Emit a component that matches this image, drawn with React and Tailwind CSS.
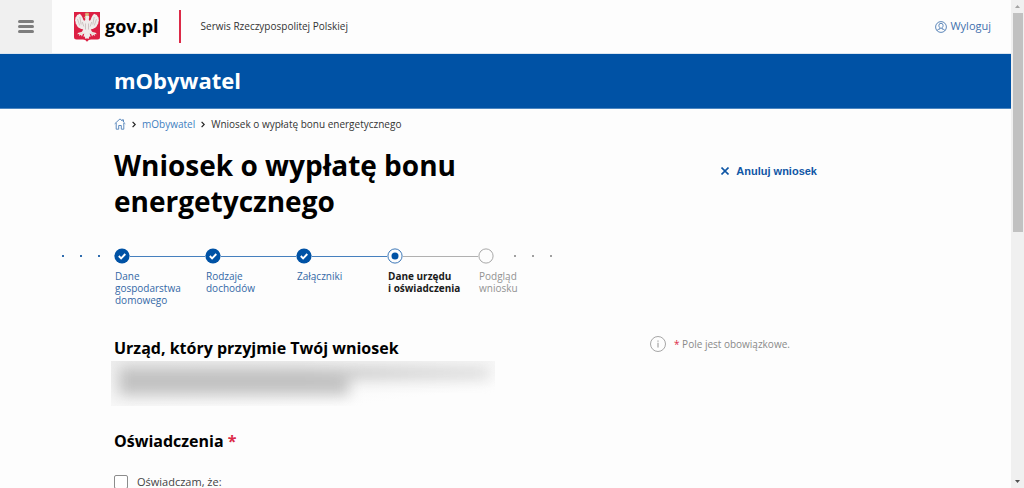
const steps = [
  { label: ['Dane', 'gospodarstwa', 'domowego'], state: 'done' },
  { label: ['Rodzaje', 'dochodów'], state: 'done' },
  { label: ['Załączniki'], state: 'done' },
  { label: ['Dane urzędu', 'i oświadczenia'], state: 'current' },
  { label: ['Podgląd', 'wniosku'], state: 'todo' },
];

const labelStyles = {
  done: 'text-[#3468a6]',
  current: 'font-bold text-[#1b1b1b]',
  todo: 'text-[#929292]',
};

const Eagle = () => (
  <svg viewBox="0 0 26 30" className="h-[30px] w-[26px]" aria-hidden="true">
    <path d="M0 0h26v25q0 2.500-2.500 2.500H17q-2.500 0-4 2.200-1.500-2.200-4-2.200H2.500Q0 27.500 0 25z" fill="#dc1f43" />
    <g fill="#f0eceb">
      <path d="M11.200 4.200c.4-1.300 3.700-1.500 4 .6.200 1.500-.7 2.200-.2 3.500.8.700 1.400.2 1.800-.8.700-2.200 1.700-4.500 3.600-5.700.6.900 1.700.7 2.700 1.500-.1 1.100 1.100 1.600 1.600 2.500-.4 1 .3 2 .2 3.100-.8.700-.3 2-.8 3-1 .4-.8 1.600-1.400 2.500-.9.100-1 1.200-1.800 1.700-.9-.2-1.300.9-2.200 1-.6-.5-1.200.2-1.900.2.400 1.200.8 2 1.800 2.700l3 .8 1.300 1.500-2.300-.2.600 1.900-2.100-1.200-1 1.600-.9-2.200-1.500-.6.900 3.200-1.300-.3-.8 2.400-1.500-.7-1.500.7-.8-2.400-1.300.3.900-3.200-1.500.6-.9 2.200-1-1.600-2.100 1.200.6-1.900-2.300.2 1.300-1.500 3-.8c1-.7 1.400-1.500 1.800-2.700-.7 0-1.300-.7-1.900-.2-.9-.1-1.300-1.200-2.200-1-.8-.5-.9-1.600-1.800-1.700-.6-.9-.4-2.100-1.400-2.500-.5-1 0-2.300-.8-3-.1-1.100.6-2.100.2-3.100.5-.9 1.700-1.400 1.600-2.500 1-.8 2.100-.6 2.700-1.500 1.900 1.200 2.900 3.500 3.600 5.700.4 1 1 1.500 1.800.8.500-1 .3-1.700 0-2.400z" />
    </g>
    <path d="M5.800 5l1.400 7.500M3.500 7l2.200 6.500M20.200 5l-1.400 7.500M22.500 7l-2.200 6.500M11.500 11.500v6M14.500 11.500v6M8.300 10l1.500 4.500M17.700 10l-1.500 4.500" fill="none" stroke="#b5aaa8" strokeWidth=".6" />
    <path d="M11.300 2l.3-1 .7.600.7-1 .7 1 .7-.6.300 1-.2 1.500h-3zM10 5.400l1.400-.5v1.200zM6.500 21.500l2-.5M17.500 21l2 .5" fill="#d8bd78" stroke="#d8bd78" strokeWidth=".4" />
  </svg>
);

const HomeIcon = () => (
  <svg viewBox="0 0 12 12" className="h-3 w-3" fill="none" stroke="#4d7fb8" strokeWidth=".9" strokeLinejoin="round">
    <path d="M.7 5.800L6 .9l2.200 2V1.800h1.300v2.300l1.800 1.700M2.200 5v6.200h2.500V7.500h2.600v3.700h2.500V5" />
  </svg>
);

const Chevron = () => (
  <svg viewBox="0 0 4 7" className="h-[7px] w-1" fill="none" stroke="#222222" strokeWidth="1.200" aria-hidden="true">
    <path d="M.6 .8L3.200 3.500.6 6.200" />
  </svg>
);

const UserIcon = () => (
  <svg viewBox="0 0 12 12" className="h-3 w-3" fill="none" stroke="#4c7ab2" strokeWidth=".9" aria-hidden="true">
    <circle cx="6" cy="6" r="5.400" />
    <path d="M3.900 4.400a2.100 2.100 0 0 1 4.200 0c0 1.500-.9 2.800-2.100 2.800S3.900 5.900 3.900 4.400zM2 9.500c.5-1 1.600-1.200 2.900-1.500V7M10 9.500C9.500 8.500 8.400 8.300 7.100 8V7" />
  </svg>
);

const StepMark = ({ state }) => (
  <svg viewBox="0 0 16 16" className="h-4 w-4 shrink-0" fill="none" aria-hidden="true">
    {state === 'done' && (
      <>
        <circle cx="8" cy="8" r="7.600" fill="#0052a5" />
        <path d="M4.800 8l2.300 2.300 4.200-4.300" stroke="#ffffff" strokeWidth="1.900" />
      </>
    )}
    {state === 'current' && (
      <>
        <circle cx="8" cy="8" r="7.100" stroke="#3d78b8" />
        <circle cx="8" cy="8" r="3.500" fill="#0052a5" />
      </>
    )}
    {state === 'todo' && <circle cx="8" cy="8" r="7.100" stroke="#a8a8a8" />}
  </svg>
);

const Dots = ({ className }) => (
  <div className={`flex h-4 items-center gap-4 ${className}`} aria-hidden="true">
    <span className="h-0.5 w-0.5 bg-current" />
    <span className="h-0.5 w-0.5 bg-current" />
    <span className="h-0.5 w-0.5 bg-current" />
  </div>
);

const Header = () => (
  <header className="flex h-[54px] items-center border-b border-[#dce6f0]">
    <button type="button" aria-label="Menu" className="flex h-full w-[52px] flex-col items-center justify-center gap-[2px] bg-[#f0f0f0]">
      <span className="h-[3px] w-4 rounded-xs bg-[#7d7d7d]" />
      <span className="h-[3px] w-4 rounded-xs bg-[#7d7d7d]" />
      <span className="h-[3px] w-4 rounded-xs bg-[#7d7d7d]" />
    </button>
    <a href="#" className="ml-[22px] flex items-center gap-[5px] text-[18px] font-bold text-black">
      <Eagle />
      gov.pl
    </a>
    <span className="ml-5 h-[33px] w-0.5 bg-[#dc2a48]" />
    <span className="ml-5 text-[10px] text-[#333333]">Serwis Rzeczypospolitej Polskiej</span>
    <a href="#" className="mr-5 ml-auto flex items-center gap-[3px] text-[11px] text-[#3f70ad]">
      <UserIcon />
      Wyloguj
    </a>
  </header>
);

const Breadcrumbs = () => (
  <nav className="flex h-4 items-center text-[10px] text-[#333333]">
    <a href="#" aria-label="Strona główna" className="mr-[6px]">
      <HomeIcon />
    </a>
    <Chevron />
    <a href="#" className="mx-[6px] text-[#3f7fbf]">mObywatel</a>
    <Chevron />
    <span className="ml-[6px]">Wniosek o wypłatę bonu energetycznego</span>
  </nav>
);

const Stepper = () => (
  <div className="mt-[29px] flex pl-[62px]">
    <Dots className="w-[52px] text-[#2f6cae]" />
    <ol className="flex">
      {steps.map(({ label, state }, i) => (
        <li key={label[0]} className={i < steps.length - 1 ? 'w-[91px]' : 'w-[52px]'}>
          <div className="flex items-center">
            <StepMark state={state} />
            {i < steps.length - 1 && (
              <span className={`h-px flex-1 ${state === 'done' ? 'bg-[#4680be]' : 'bg-[#b0b0b0]'}`} />
            )}
          </div>
          <div className={`mt-[6px] pl-px text-[10px] leading-3 whitespace-nowrap ${labelStyles[state]}`}>
            {label.map((line) => (
              <span key={line} className="block">{line}</span>
            ))}
          </div>
        </li>
      ))}
    </ol>
    <Dots className="-ml-4 text-[#a0a0a0]" />
  </div>
);

// office address, hidden under a blur
const RedactedAddress = () => (
  <div className="mt-px -ml-[3px] h-[45px] w-[384px] overflow-hidden bg-linear-to-br from-[#eeeeee] to-[#fdfdfd] to-80%">
    <div className="ml-2 pt-1.5 blur-[7px]">
      <div className="h-3 w-[370px] bg-linear-to-r from-[#c2c2c2] from-50% to-[#dcdcdc]" />
      <div className="h-4 w-[230px] bg-[#c2c2c2]" />
    </div>
  </div>
);

const Scrollbar = () => (
  <div className="flex w-[13px] shrink-0 flex-col items-center bg-[#f0f0f0]" aria-hidden="true">
    <svg viewBox="0 0 13 13" className="h-[13px] w-[13px]">
      <path d="M4 8l2.500-3L9 8z" fill="#a3a3a3" />
    </svg>
    <div className="h-[219px] w-[10px] bg-[#c1c1c1]" />
    <svg viewBox="0 0 13 13" className="mt-auto h-[13px] w-[13px]">
      <path d="M4 5l2.500 3L9 5z" fill="#505050" />
    </svg>
  </div>
);

export default function App() {
  return (
    <div className="flex h-screen overflow-hidden bg-[#fdfdfd] font-['Open_Sans',sans-serif]">
      <div className="min-w-0 flex-1">
        <Header />
        <div className="flex h-[55px] items-center border-b border-[#4c86c0] bg-[#0052a5] pb-0.5 pl-[114px]">
          <span className="text-[22px] font-bold text-white">mObywatel</span>
        </div>

        <main className="pt-[7px]">
          <div className="max-w-[817px] pl-[114px]">
            <Breadcrumbs />
            <div className="mt-[15px] flex items-start justify-between">
              <h1 className="w-[380px] text-[28px] leading-9 font-bold text-black">
                Wniosek o wypłatę bonu energetycznego
              </h1>
              <button type="button" className="mt-4 flex items-center gap-[7px] font-['Liberation_Sans',sans-serif] text-[11px] leading-4 font-bold text-[#0f56a5]">
                <svg viewBox="0 0 8 8" className="h-2 w-2" fill="none" stroke="currentColor" strokeWidth="1.600" aria-hidden="true">
                  <path d="M.5 .5l7 7M7.500 .5l-7 7" />
                </svg>
                Anuluj wniosek
              </button>
            </div>
          </div>

          <Stepper />

          <div className="mt-[30px] flex max-w-[817px] items-start justify-between pl-[114px]">
            <section>
              <h2 className="text-[16px] leading-6 font-bold text-black">Urząd, który przyjmie Twój wniosek</h2>
              <RedactedAddress />
            </section>
            <p className="flex w-[167px] items-center gap-2 text-[10px] leading-4 text-[#8a8a8a]">
              <svg viewBox="0 0 16 16" className="h-4 w-4" fill="none" stroke="#a6a6a6" aria-hidden="true">
                <circle cx="8" cy="8" r="7.500" />
                <path d="M8 6.800v4.700M8 4.500v1.200" strokeWidth="1.200" />
              </svg>
              <span>
                <span className="text-[#dc2a48]">*</span> Pole jest obowiązkowe.
              </span>
            </p>
          </div>

          <section className="mt-[23px] pl-[114px]">
            <h2 className="text-[16px] leading-6 font-bold text-black">
              Oświadczenia <span className="text-[#dc2a48]">*</span>
            </h2>
            <label className="mt-[21px] flex items-center gap-[9px] text-[11px] leading-4 text-[#444444]">
              <input type="checkbox" className="h-[14px] w-[14px] appearance-none rounded-xs border border-[#8c8c8c] bg-white" />
              Oświadczam, że:
            </label>
          </section>
        </main>
      </div>
      <Scrollbar />
    </div>
  );
}
